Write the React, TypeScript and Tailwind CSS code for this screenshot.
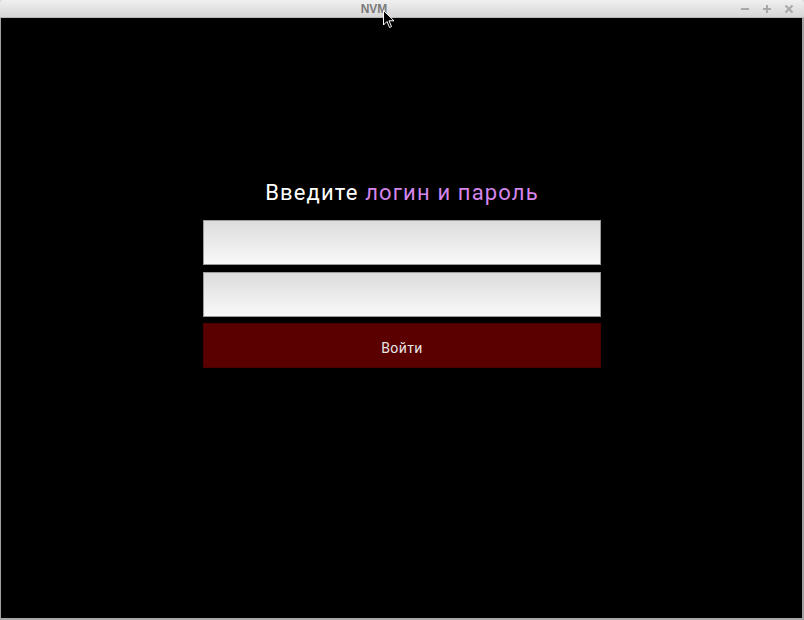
import React from 'react';

const TitleBar: React.FC = () => (
  <div className="relative h-[18px] flex items-center justify-center pr-[56px] bg-gradient-to-b from-[#f0f0f0] to-[#d6d6d6] border-b border-[#b8b8b8] rounded-t-[3px]">
    <span className="text-[12px] font-bold text-[#7b7b7b] leading-none" style={{ fontFamily: '"Liberation Sans", sans-serif' }}>
      NVM
    </span>
    <div className="absolute right-[10px] top-0 h-full flex items-center gap-[12px] text-[#a8a8a8]">
      <svg width="10" height="10" viewBox="0 0 10 10">
        <rect x="1" y="4" width="8" height="2" fill="currentColor" />
      </svg>
      <svg width="10" height="10" viewBox="0 0 10 10">
        <rect x="1" y="4" width="8" height="2" fill="currentColor" />
        <rect x="4" y="1" width="2" height="8" fill="currentColor" />
      </svg>
      <svg width="10" height="10" viewBox="0 0 10 10">
        <path d="M1.5 1.5 L8.5 8.5 M8.5 1.5 L1.5 8.5" stroke="currentColor" strokeWidth="2" />
      </svg>
    </div>
    {/* mouse pointer */}
    <svg className="absolute left-[383px] top-[10px]" width="12" height="19" viewBox="0 0 12 19">
      <path d="M0.5 0.5 L0.5 15 L4 11.5 L6.5 17.5 L8.5 16.6 L6 10.8 L11 10.8 Z" fill="#000" stroke="#fff" strokeWidth="1" />
    </svg>
  </div>
);

const LoginForm: React.FC = () => (
  <div className="w-[398px] flex flex-col">
    <h1
      className="text-center text-[22px] leading-[26px] tracking-[1.15px] text-white"
      style={{ fontFamily: 'Roboto, "Noto Sans", sans-serif' }}
    >
      Введите <span className="text-[#d586ec]">логин и пароль</span>
    </h1>
    <input
      type="text"
      className="mt-[14px] h-[45px] border border-[#9c9c9c] bg-gradient-to-b from-[#dcdcdc] to-[#f9f9f9] outline-none"
    />
    <input
      type="password"
      className="mt-[7px] h-[45px] border border-[#9c9c9c] bg-gradient-to-b from-[#dcdcdc] to-[#f9f9f9] outline-none"
    />
    <button
      className="mt-[6px] h-[45px] bg-[#5a0000] border border-[#4a0000] text-[#e6e6e6] text-[14px] tracking-[0.4px] pt-[5px]"
      style={{ fontFamily: 'Roboto, "Noto Sans", sans-serif' }}
    >
      Войти
    </button>
  </div>
);

export default function App() {
  return (
    <div className="w-[804px] h-[620px] flex flex-col bg-[#d0d0d0] overflow-hidden">
      <TitleBar />
      <main className="flex-1 bg-black border-l border-l-[#a0a0a0] border-r-2 border-r-[#a0a0a0] border-b-2 border-b-[#a8a8a8] flex justify-center pt-[162px] pl-[1px]">
        <LoginForm />
      </main>
    </div>
  );
}
